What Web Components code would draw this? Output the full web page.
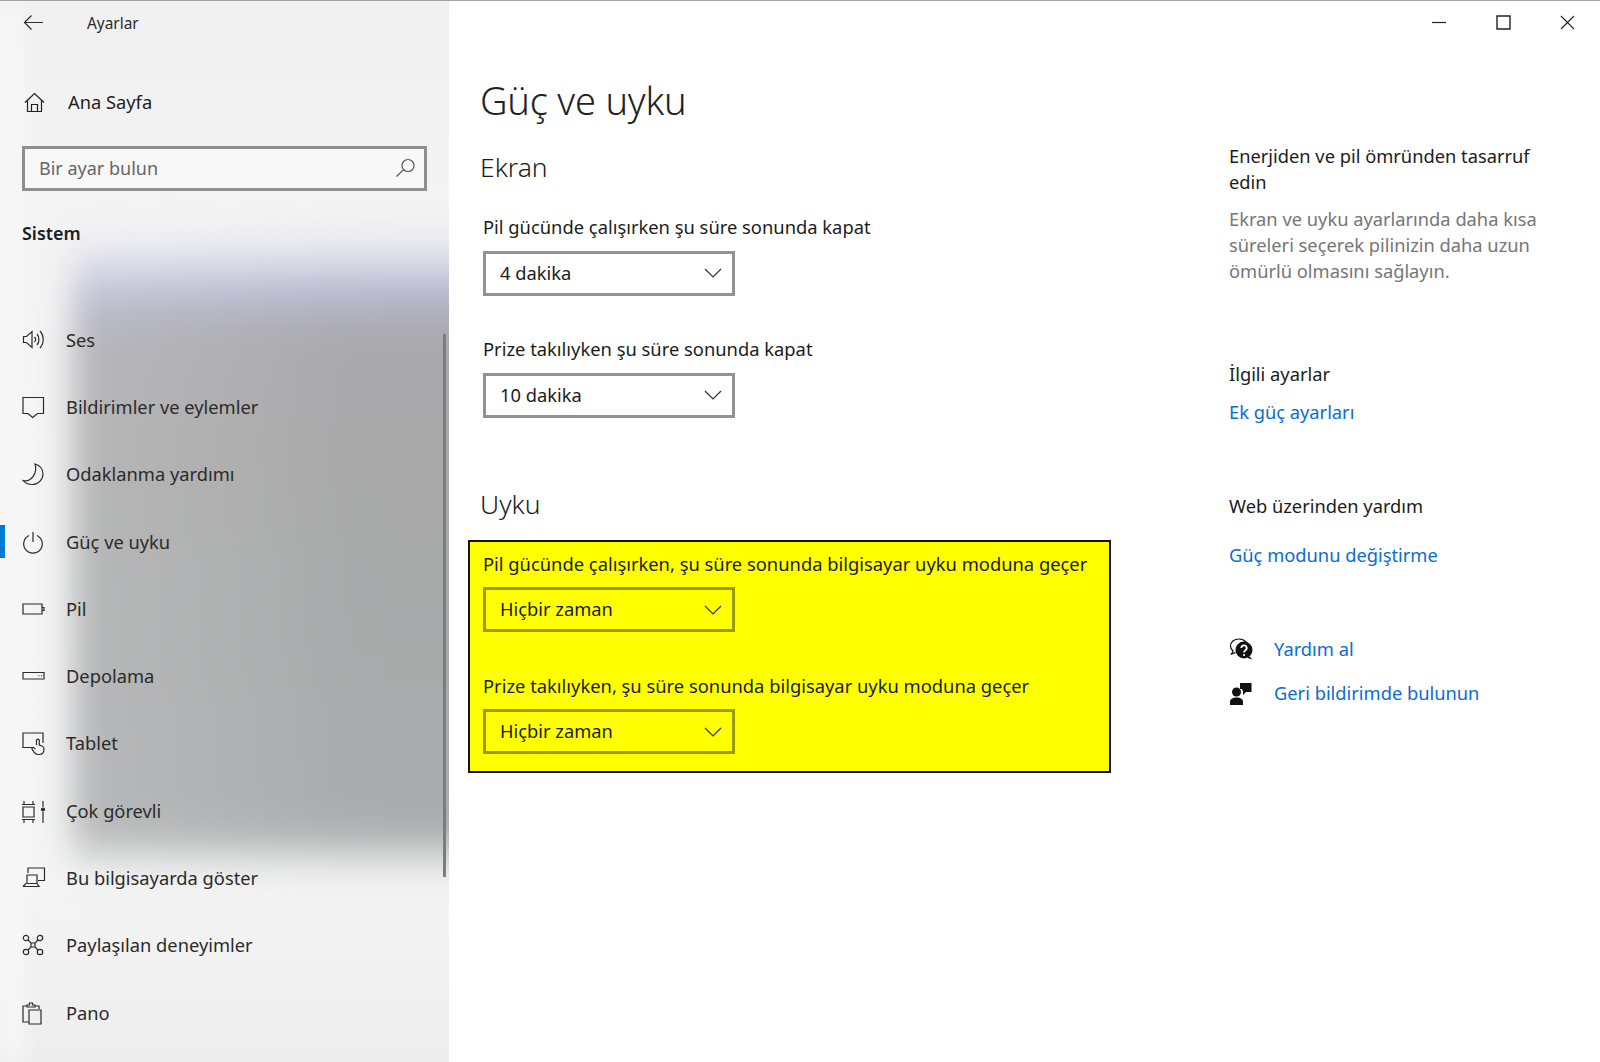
<!DOCTYPE html>
<html lang="tr"><head><meta charset="utf-8">
<style>
html,body{margin:0;height:100%;background:#fff}
body{font-family:"Noto Sans","Open Sans",sans-serif;overflow:hidden}
</style></head><body>
<settings-app>
<side-nav slot="nav"></side-nav>
<main-pane slot="main"></main-pane>
<help-pane slot="aside"></help-pane>
</settings-app>
<script>
const I={
back:'<path d="M20 10.5H1.5M8.5 3.5l-7 7 7 7"/>',
home:'<path d="M1 10.5 10.5 1.5 20 10.5M3.5 8.5V19.5h14V8.5M7.5 19.5v-7h6v7"/>',
search:'<circle cx="13" cy="7.5" r="6"/><path d="M8.6 11.6 1.5 18.5"/>',
ses:'<path d="M1.5 7.5h3L10 2.5v16l-5.5-5h-3zM12.5 8c1.300 1.400 1.300 3.600 0 5M15 5c2.600 3 2.600 8 0 11M18 2c4.200 4.600 4.200 12.400 0 17"/>',
bil:'<path d="M1 1.500h20.500v16h-6l-4.800 4-4.800-4H1z"/>',
moon:'<path d="M13 1C18 2.500 21 6.500 21 11 21 16.500 16 21.500 10.500 21.500 6.500 21.500 3 20 1 17.500 9 19.500 16 10 13 1Z"/>',
power:'<path d="M11 1v10M7 4.500a9.300 9.300 0 1 0 8 0"/>',
pil:'<path d="M1 6h19v10H1zM20 9.500h2v3h-2"/>',
dep:'<path d="M1 7.500h21v6.500H1zM16.500 10.700h.8M19 10.700h.8"/>',
tab:'<path d="M10 15.500H1V1h20v10"/><path d="M14.500 13V8.500a1.400 1.400 0 0 1 2.800 0V13l2.800 1c1.600.7 1.900 1.600 1.900 3 0 3.500-2 5.500-4.800 5.500h-1.200c-1.800 0-3-1-4-2.400l-1.900-3c-.8-1.300 1-2.400 2-1.300l1.400 1.400"/>',
cok:'<path d="M0 4.500h13M0 19.500h13M2 1v3.500M11 1v3.500M2 19.500V23M11 19.500V23M1 7h11v10H1zM21 1v6M21 12v11"/><circle cx="21" cy="9.500" r="1.500" fill="currentColor"/>',
goster:'<path d="M6 6V1h16.500v12.500H16M5 8h10v8.500H5zM1 19.500l3-3M1 19.500h16l-2-3"/>',
pay:'<circle cx="4" cy="4" r="2.700"/><circle cx="18" cy="4" r="2.700"/><circle cx="4" cy="18" r="2.700"/><circle cx="18" cy="18" r="2.700"/><path d="M9 9h4v4H9zM6 6l3 3M16 6l-3 3M6 16l3-3M16 16l-3-3"/>',
pano:'<path d="M7 20H1V4h4M13 4h4v3"/><path d="M5 5V3h2.500V1h3v2H13v2zM7 8h12v14H7z"/>',
chev:'<path d="M1 1l8 8 8-8"/>'
};
const svg=(n,w,h,vb,extra='')=>`<svg width="${w}" height="${h}" viewBox="${vb}" fill="none" stroke="currentColor" stroke-width="1.200" ${extra}>${I[n]}</svg>`;

customElements.define('settings-app',class extends HTMLElement{constructor(){super();this.attachShadow({mode:'open'}).innerHTML=`<style>
:host{display:block;height:1062px;box-sizing:border-box;border-top:1px solid #a3a3a3;position:relative}
.g{display:grid;grid-template-columns:449px 1fr;height:100%}
.r{display:grid;grid-template-columns:749px 1fr;}
win-controls{position:absolute;top:0;right:0}
</style><div class="g"><slot name="nav"></slot><div class="r"><slot name="main"></slot><slot name="aside"></slot></div></div><win-controls></win-controls>`}});

customElements.define('win-controls',class extends HTMLElement{constructor(){super();this.attachShadow({mode:'open'}).innerHTML=`<style>
:host{display:flex;color:#222}
div{width:64.500px;height:42px;display:flex;align-items:center;justify-content:center}
</style>
<div><svg width="16" height="16" viewBox="0 0 16 16" stroke="currentColor" stroke-width="1.200"><path d="M1 8.500h14"/></svg></div>
<div><svg width="15" height="15" viewBox="0 0 15 15" fill="none" stroke="currentColor" stroke-width="1.400"><path d="M1 1h13v13H1z"/></svg></div>
<div style="width:63px;padding-right:1px"><svg width="15" height="15" viewBox="0 0 15 15" fill="none" stroke="currentColor" stroke-width="1.100"><path d="M1 1l13 13M14 1 1 14"/></svg></div>`}});

customElements.define('nav-row',class extends HTMLElement{constructor(){super();const t=this.getAttribute('icon'),a=this.hasAttribute('active');
this.attachShadow({mode:'open'}).innerHTML=`<style>
:host{display:grid;grid-template-columns:23px 1fr;column-gap:21px;align-items:center;height:67.300px;padding-left:22px;position:relative;color:#2b2b2b;font-size:18.300px}
svg{display:block;justify-self:center;overflow:visible}
.bar{position:absolute;left:0;top:50%;margin-top:-17px;width:5px;height:33px;background:#0078d7}
span{position:relative;top:-1px}
</style>${a?'<i class="bar"></i>':''}${svg(t,23,23,'0 0 23 23')}<span><slot></slot></span>`}});

customElements.define('side-nav',class extends HTMLElement{constructor(){super();this.attachShadow({mode:'open'}).innerHTML=`<style>
:host{display:block;position:relative;overflow:hidden;height:100%;background:linear-gradient(180deg,#f0f0f0 0,#f4f4f4 220px,#f5f5f5 880px,#ededed 100%);color:#1f1f1f}
.blob{position:absolute;left:72px;right:-60px;top:225px;height:665px;filter:blur(16px);background:linear-gradient(90deg,rgba(255,255,255,.16),rgba(255,255,255,0) 65%),linear-gradient(180deg,rgba(224,224,236,0) 0,#e0e0ec 30px,#b8b8d0 66px,#aaa9ae 108px,#a9a9a9 230px,#a9acad 575px,#aeb0b0 610px,#e8e8e8 640px,rgba(240,240,240,0) 665px)}
.fade{position:absolute;left:0;top:0;bottom:0;width:22px;background:#f8f8f8;filter:blur(10px)}
.body{position:relative;display:flex;flex-direction:column;padding:0 22px 0 0}
.top{display:flex;align-items:center;height:42px;padding-left:23px;color:#2a2a2a}
.top b{font-weight:400;font-size:15.400px;margin-left:43px;position:relative;top:1px}
.home{display:flex;align-items:center;padding:42px 0 0 24px;height:34px;font-size:18.300px}
.home span{margin-left:23px;position:relative;top:-1px}
.search{margin:27px 0 0 22px;height:45px;box-sizing:border-box;border:3px solid #8f8f8f;background:#f8f8f8;display:flex;align-items:center;justify-content:space-between;padding:0 9px 2px 14px;font-size:18px;color:#666}
.search svg{color:#555}
.h{font-weight:600;font-size:17.900px;margin:27px 0 0 22px;line-height:30px;color:#1e1e1e}
.list{margin-top:58.500px;display:flex;flex-direction:column}
.sb{position:absolute;left:443px;top:333px;width:3px;height:543px;background:#7c7c7c}
</style>
<div class="blob"></div><div class="fade"></div>
<div class="body">
<div class="top">${svg('back',21,21,'0 0 21 21')}<b>Ayarlar</b></div>
<div class="home">${svg('home',21,21,'0 0 21 21')}<span>Ana Sayfa</span></div>
<div class="search"><span>Bir ayar bulun</span>${svg('search',20,20,'0 0 20 20')}</div>
<div class="h">Sistem</div>
<div class="list">
<nav-row icon="ses">Ses</nav-row>
<nav-row icon="bil">Bildirimler ve eylemler</nav-row>
<nav-row icon="moon">Odaklanma yardımı</nav-row>
<nav-row icon="power" active>Güç ve uyku</nav-row>
<nav-row icon="pil">Pil</nav-row>
<nav-row icon="dep">Depolama</nav-row>
<nav-row icon="tab">Tablet</nav-row>
<nav-row icon="cok">Çok görevli</nav-row>
<nav-row icon="goster">Bu bilgisayarda göster</nav-row>
<nav-row icon="pay">Paylaşılan deneyimler</nav-row>
<nav-row icon="pano">Pano</nav-row>
</div></div><div class="sb"></div>`}});

customElements.define('drop-down',class extends HTMLElement{constructor(){super();this.attachShadow({mode:'open'}).innerHTML=`<style>
:host{display:flex;width:252px;height:45px;box-sizing:border-box;border:3px solid var(--dd,#929292);align-items:center;justify-content:space-between;padding:0 10px 0 14px;font-size:18.300px;color:#1c1c1c}
svg{color:#333}
span{position:relative;top:-1px}
</style><span><slot></slot></span>${svg('chev',18,10,'0 0 18 10')}`}});

customElements.define('set-field',class extends HTMLElement{constructor(){super();this.attachShadow({mode:'open'}).innerHTML=`<style>
:host{display:block}
.l{font-size:18.350px;line-height:30px;color:#1c1c1c;margin-bottom:8.500px;white-space:nowrap}
</style><div class="l">${this.getAttribute('label')}</div><slot></slot>`}});

customElements.define('main-pane',class extends HTMLElement{constructor(){super();this.attachShadow({mode:'open'}).innerHTML=`<style>
:host{display:block;padding-left:31px;color:#1c1c1c}
h1{font-weight:300;font-size:38px;line-height:56px;margin:71px 0 0;color:#222;letter-spacing:-.2px}
h2{font-weight:300;font-size:26.500px;line-height:38px;margin:0}
.e{margin-top:20px}
.f1{margin:26px 0 0 3px}
set-field+set-field{margin-top:38.500px}
.u{margin-top:67px}
.hl{margin:17px 0 0 -12px;width:643px;box-sizing:border-box;height:233px;background:#ff0;border:2.500px solid #111;padding:7px 12px 0 13px;--dd:#999900;display:flex;flex-direction:column}
.hl set-field+set-field{margin-top:38.500px}
</style>
<h1>Güç ve uyku</h1>
<h2 class="e">Ekran</h2>
<div class="f1">
<set-field label="Pil gücünde çalışırken şu süre sonunda kapat"><drop-down>4 dakika</drop-down></set-field>
<set-field label="Prize takılıyken şu süre sonunda kapat"><drop-down>10 dakika</drop-down></set-field>
</div>
<h2 class="u">Uyku</h2>
<div class="hl">
<set-field label="Pil gücünde çalışırken, şu süre sonunda bilgisayar uyku moduna geçer"><drop-down>Hiçbir zaman</drop-down></set-field>
<set-field label="Prize takılıyken, şu süre sonunda bilgisayar uyku moduna geçer"><drop-down>Hiçbir zaman</drop-down></set-field>
</div>`}});

customElements.define('help-pane',class extends HTMLElement{constructor(){super();this.attachShadow({mode:'open'}).innerHTML=`<style>
:host{display:block;padding:142px 40px 0 31px;font-size:18.300px;line-height:26.300px;color:#1c1c1c}
p{margin:0}
.m{color:#767676;margin-top:10px}
a{color:#0a6cd6;text-decoration:none;display:block}
.s1{margin-top:77px}
.a1{margin-top:11px}
.s2{margin-top:68px}
.a2{margin-top:23px}
.row{display:flex;align-items:center;gap:21px}
.row svg{display:block;flex:none}
.r1{margin-top:67px}
.r2{margin-top:18px}
</style>
<p>Enerjiden ve pil ömründen tasarruf edin</p>
<p class="m">Ekran ve uyku ayarlarında daha kısa süreleri seçerek pilinizin daha uzun ömürlü olmasını sağlayın.</p>
<p class="s1">İlgili ayarlar</p>
<a class="a1">Ek güç ayarları</a>
<p class="s2">Web üzerinden yardım</p>
<a class="a2">Güç modunu değiştirme</a>
<a class="row r1"><svg width="24" height="24" viewBox="0 0 24 24"><path d="M10 2C5 2 1.500 5 1.500 9c0 2 1 3.700 2.500 5l-1.500 3 4-1.600" fill="none" stroke="#111" stroke-width="1.200"/><path d="M10 2c3 0 5.500 1.200 7 3" fill="none" stroke="#111" stroke-width="1.200"/><circle cx="15" cy="13" r="8.500" fill="#111"/><path d="M20 19l3.500 3.500-5-1.500z" fill="#111"/><path d="M12.300 11a2.700 2.700 0 1 1 4 2.400c-1 .6-1.300 1-1.300 2" fill="none" stroke="#fff" stroke-width="1.800"/><circle cx="15" cy="18" r="1.100" fill="#fff"/></svg><span>Yardım al</span></a>
<a class="row r2"><svg width="24" height="24" viewBox="0 0 24 24" fill="#111"><circle cx="7.500" cy="11" r="4.500"/><path d="M1 24v-3c0-3 2.500-4.500 6.500-4.500S14 18 14 21v3z"/><path d="M11 2h11.500v9H17l-3 3v-3.500l-1-2.500h-2z"/></svg><span>Geri bildirimde bulunun</span></a>`}});
</script></body></html>
